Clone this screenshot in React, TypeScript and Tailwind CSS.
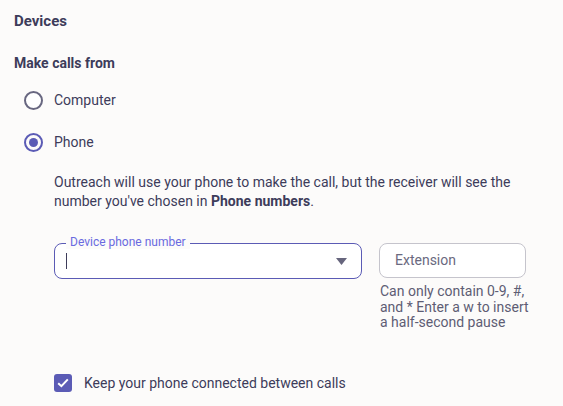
export default function App() {
  return (
    <div className="min-h-screen w-[563px] h-[406px] overflow-hidden bg-[#fcfbfa] text-[#3d3c5a] font-['Roboto',sans-serif]">
      <div className="px-[14px] pt-[10px]">
        <h2 className="text-[15px] font-bold leading-[22px]">Devices</h2>
        <h3 className="mt-[21px] text-[14px] font-bold leading-[20px]">Make calls from</h3>

        <div className="mt-[17px] ml-[10px] flex flex-col gap-[22px]">
          <label className="flex items-center gap-[11px] h-[20px]">
            <span className="w-[19px] h-[19px] rounded-full border-2 border-[#686780] bg-white" />
            <span className="text-[14px]">Computer</span>
          </label>
          <label className="flex items-center gap-[11px] h-[20px]">
            <span className="w-[19px] h-[19px] rounded-full border-2 border-[#5b5bb5] flex items-center justify-center">
              <span className="w-[9px] h-[9px] rounded-full bg-[#5b5bb5]" />
            </span>
            <span className="text-[14px]">Phone</span>
          </label>
        </div>

        <div className="ml-[40px]">
          <p className="mt-[21px] text-[14px] leading-[19px]">
            Outreach will use your phone to make the call, but the receiver will see the number you've chosen in{' '}
            <span className="font-bold">Phone numbers</span>.
          </p>

          <div className="mt-[32px] flex gap-[17px]">
            <div className="relative w-[308px] h-[36px] rounded-[8px] border border-[#5b5bb5] bg-white flex items-center pl-[11px] pr-[14px]">
              <span className="absolute -top-[9px] left-[11px] px-[4px] bg-[#fcfbfa] text-[12px] leading-[14px] text-[#6a6ae0]">
                Device phone number
              </span>
              <span className="w-px h-[16px] bg-[#3d3c5a]" />
              <svg className="ml-auto" width="11" height="7" viewBox="0 0 11 7">
                <path d="M0 0h11L5.5 7z" fill="#66657d" />
              </svg>
            </div>
            <div className="w-[147px]">
              <div className="h-[35px] rounded-[8px] border border-[#c5c4cc] bg-white flex items-center px-[15px] text-[14px] text-[#6a6980]">
                Extension
              </div>
              <p className="mt-[6px] pl-px w-[150px] text-[14px] leading-[15.5px] text-[#5e5d74]">
                Can only contain 0-9, #, and * Enter a w to insert a half-second pause
              </p>
            </div>
          </div>

          <label className="mt-[42px] flex items-center gap-[12px]">
            <span className="w-[18px] h-[18px] rounded-[3px] bg-[#5b5bb5] flex items-center justify-center">
              <svg width="12" height="10" viewBox="0 0 12 10">
                <path d="M1.2 5.2l3.2 3L10.8 1.4" stroke="white" strokeWidth="2" fill="none" />
              </svg>
            </span>
            <span className="text-[14px]">Keep your phone connected between calls</span>
          </label>
        </div>
      </div>
    </div>
  )
}
